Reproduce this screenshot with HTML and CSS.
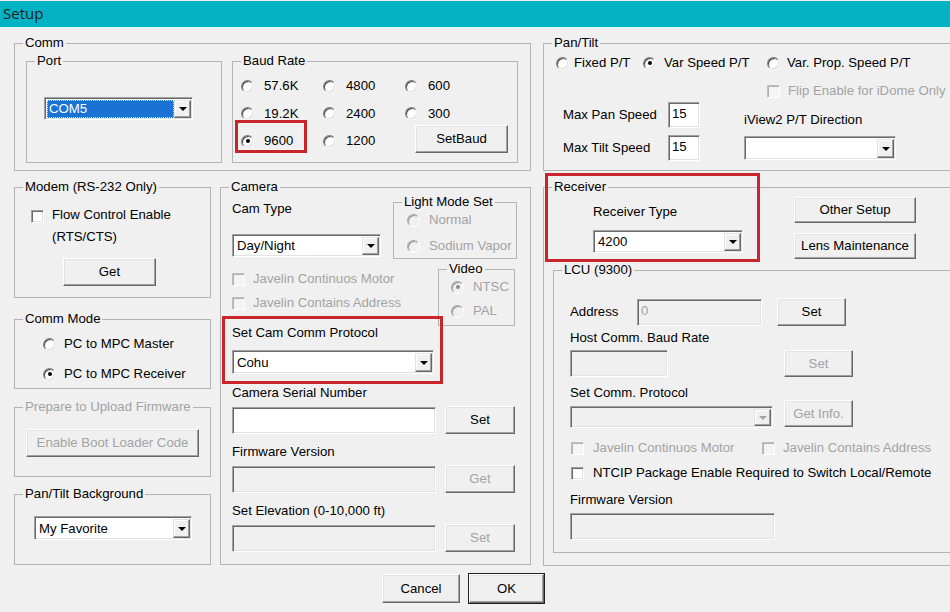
FILE: index.html
```html
<!DOCTYPE html>
<html>
<head>
<meta charset="utf-8">
<title>Setup</title>
<link rel="stylesheet" href="styles.css">
</head>
<body>
<div class="titlebar">Setup</div>
<div class="main">
  <div class="row1">
    <fieldset class="grp comm">
      <legend>Comm</legend>
      <div class="comm-body">
        <fieldset class="grp port">
          <legend>Port</legend>
          <div class="combo port-combo"><span class="combo-text"><span class="sel">COM5</span></span><span class="combo-btn"></span></div>
        </fieldset>
        <fieldset class="grp baud">
          <legend>Baud Rate</legend>
          <div class="baud-grid">
            <div class="opt g10"><span class="radio"></span>57.6K</div>
            <div class="opt g10"><span class="radio"></span>4800</div>
            <div class="opt g10"><span class="radio"></span>600</div>
            <div class="opt g10"><span class="radio"></span>19.2K</div>
            <div class="opt g10"><span class="radio"></span>2400</div>
            <div class="opt g10"><span class="radio"></span>300</div>
            <div class="opt g10 hl-baud"><span class="radio on"></span>9600</div>
            <div class="opt g10"><span class="radio"></span>1200</div>
            <div class="btn setbaud">SetBaud</div>
          </div>
        </fieldset>
      </div>
    </fieldset>

    <fieldset class="grp pantilt">
      <legend>Pan/Tilt</legend>
      <div class="pt-body">
        <div class="pt-radios">
          <div class="opt pt-r1"><span class="radio"></span>Fixed P/T</div>
          <div class="opt pt-r2"><span class="radio on"></span>Var Speed P/T</div>
          <div class="opt pt-r3"><span class="radio"></span>Var. Prop. Speed P/T</div>
        </div>
        <div class="opt flip dis"><span class="check dis"></span>Flip Enable for iDome Only</div>
        <div class="pt-speeds">
          <div class="speed-grid">
            <span class="speed-lbl">Max Pan Speed</span><div class="field speed-in">15</div>
            <span class="speed-lbl">Max Tilt Speed</span><div class="field speed-in">15</div>
          </div>
          <div class="iview">
            <div class="iview-lbl">iView2 P/T Direction</div>
            <div class="combo iview-combo"><span class="combo-text"></span><span class="combo-btn"></span></div>
          </div>
        </div>
      </div>
    </fieldset>
  </div>

  <div class="row2">
    <div class="leftcol">
      <fieldset class="grp modem">
        <legend>Modem (RS-232 Only)</legend>
        <div class="modem-body">
          <div class="flow"><span class="check"></span><span>Flow Control Enable<br>(RTS/CTS)</span></div>
          <div class="btn get-btn">Get</div>
        </div>
      </fieldset>
      <fieldset class="grp commmode">
        <legend>Comm Mode</legend>
        <div class="cm-body">
          <div class="opt g8"><span class="radio"></span>PC to MPC Master</div>
          <div class="opt g8"><span class="radio on"></span>PC to MPC Receiver</div>
        </div>
      </fieldset>
      <fieldset class="grp prepare">
        <legend class="dis">Prepare to Upload Firmware</legend>
        <div class="btn dis boot-btn">Enable Boot Loader Code</div>
      </fieldset>
      <fieldset class="grp ptbg">
        <legend>Pan/Tilt Background</legend>
        <div class="combo ptbg-combo"><span class="combo-text">My Favorite</span><span class="combo-btn"></span></div>
      </fieldset>
    </div>

    <fieldset class="grp camera">
      <legend>Camera</legend>
      <div class="cam-body">
        <div class="cam-top">
          <div class="cam-left">
            <div>Cam Type</div>
            <div class="combo camtype-combo"><span class="combo-text">Day/Night</span><span class="combo-btn"></span></div>
            <div class="opt g8 dis jav1"><span class="check dis"></span>Javelin Continuos Motor</div>
            <div class="opt g8 dis jav2"><span class="check dis"></span>Javelin Contains Address</div>
          </div>
          <div class="cam-right">
            <fieldset class="grp lightmode">
              <legend>Light Mode Set</legend>
              <div class="lm-body">
                <div class="opt g9 dis"><span class="radio dis"></span>Normal</div>
                <div class="opt g9 dis"><span class="radio dis"></span>Sodium Vapor</div>
              </div>
            </fieldset>
            <fieldset class="grp video">
              <legend>Video</legend>
              <div class="vid-body">
                <div class="opt g9 dis"><span class="radio dis on"></span>NTSC</div>
                <div class="opt g9 dis"><span class="radio dis"></span>PAL</div>
              </div>
            </fieldset>
          </div>
        </div>
        <div class="cam-proto">
          <div>Set Cam Comm Protocol</div>
          <div class="combo proto-combo"><span class="combo-text">Cohu</span><span class="combo-btn"></span></div>
        </div>
        <div class="cam-lbl">Camera Serial Number</div>
        <div class="cam-row"><div class="field cam-in"></div><div class="btn cam-btn">Set</div></div>
        <div class="cam-lbl">Firmware Version</div>
        <div class="cam-row"><div class="field dis cam-in"></div><div class="btn dis cam-btn">Get</div></div>
        <div class="cam-lbl">Set Elevation (0-10,000 ft)</div>
        <div class="cam-row"><div class="field dis cam-in"></div><div class="btn dis cam-btn">Set</div></div>
      </div>
    </fieldset>

    <fieldset class="grp receiver">
      <legend>Receiver</legend>
      <div class="rcv-top">
        <div class="rcv-type">
          <div>Receiver Type</div>
          <div class="combo rcv-combo"><span class="combo-text">4200</span><span class="combo-btn"></span></div>
        </div>
        <div class="rcv-btns">
          <div class="btn rcv-btn">Other Setup</div>
          <div class="btn rcv-btn">Lens Maintenance</div>
        </div>
      </div>
      <fieldset class="grp lcu">
        <legend>LCU (9300)</legend>
        <div class="lcu-body">
          <div class="addr-row"><span class="addr-lbl">Address</span><div class="field dis addr-in">0</div><div class="btn addr-btn">Set</div></div>
          <div class="lcu-lbl1">Host Comm. Baud Rate</div>
          <div class="hcbr-row"><div class="field dis hcbr-in"></div><div class="btn dis hcbr-btn">Set</div></div>
          <div class="lcu-lbl2">Set Comm. Protocol</div>
          <div class="proto-row"><div class="combo dis lcu-combo"><span class="combo-text"></span><span class="combo-btn"></span></div><div class="btn dis getinfo-btn">Get Info.</div></div>
          <div class="jav-row">
            <div class="opt g9 dis jav-a"><span class="check dis"></span>Javelin Continuos Motor</div>
            <div class="opt g8 dis"><span class="check dis"></span>Javelin Contains Address</div>
          </div>
          <div class="opt g9 ntcip"><span class="check"></span>NTCIP Package Enable Required to Switch Local/Remote</div>
          <div class="lcu-lbl3">Firmware Version</div>
          <div class="field dis lcu-fw"></div>
        </div>
      </fieldset>
    </fieldset>
  </div>

  <div class="bottom">
    <div class="btn cancel-btn">Cancel</div>
    <div class="btn default ok-btn">OK</div>
  </div>
</div>
</body>
</html>
```

FILE: styles.css
```css
* { box-sizing: border-box; }
html, body { margin: 0; padding: 0; }
body {
  width: 950px;
  height: 612px;
  overflow: hidden;
  background: #f0f0f0;
  font-family: "Liberation Sans", Arial, sans-serif;
  font-size: 13.2px;
  line-height: 16px;
  color: #000;
}

.titlebar {
  margin-top: 1px;
  height: 28px;
  background: #03b3c3;
  border-bottom: 2px solid #e3f5f7;
  padding-left: 3px;
  font-family: "Open Sans", "Liberation Sans", sans-serif;
  font-size: 15px;
  line-height: 24px;
  color: #1d1d1d;
}

.main { padding: 6px 0 0 14px; width: 950px; height: 583px; overflow: hidden; }
.row1, .row2 { display: flex; align-items: flex-start; }

/* group boxes */
.grp {
  margin: 0;
  padding: 0;
  border: 1px solid #b4b4b4;
  min-width: 0;
  flex: none;
}
.grp > legend {
  padding: 0 2px;
  margin-left: 8px;
  line-height: 16px;
  height: 16px;
  white-space: nowrap;
}
.dis { color: #a3a3a3; }

/* generic controls */
.btn {
  display: flex;
  align-items: center;
  justify-content: center;
  background: #f0f0f0;
  border: 1px solid;
  border-color: #fff #696969 #696969 #fff;
  box-shadow: inset -1px -1px 0 #a0a0a0, inset 1px 1px 0 #e3e3e3;
  white-space: nowrap;
  flex: none;
}
.btn.default { outline: 1px solid #1e1e1e; }

.field {
  background: #fff;
  border: 1px solid;
  border-color: #a0a0a0 #fff #fff #a0a0a0;
  box-shadow: inset 1px 1px 0 #696969, inset -1px -1px 0 #e3e3e3;
  padding: 3px 3px 0;
  flex: none;
}
.field.dis { background: #f0f0f0; }

.combo {
  display: flex;
  background: #fff;
  border: 1px solid;
  border-color: #a0a0a0 #fff #fff #a0a0a0;
  box-shadow: inset 1px 1px 0 #696969, inset -1px -1px 0 #e3e3e3;
  padding: 2px 1px 1px 2px;
  flex: none;
}
.combo.dis { background: #f0f0f0; }
.combo-text {
  flex: 1;
  display: flex;
  align-items: center;
  padding-left: 2px;
  white-space: nowrap;
  overflow: hidden;
}
.combo-btn {
  width: 17px;
  flex: none;
  display: flex;
  align-items: center;
  justify-content: center;
  background: #f0f0f0;
  border: 1px solid;
  border-color: #e3e3e3 #696969 #696969 #e3e3e3;
  box-shadow: inset -1px -1px 0 #a0a0a0, inset 1px 1px 0 #fff;
}
.combo-btn::after {
  content: "";
  border-left: 4px solid transparent;
  border-right: 4px solid transparent;
  border-top: 4px solid #000;
}
.combo.dis .combo-btn::after { border-top-color: #a3a3a3; }
.sel {
  display: flex;
  align-items: center;
  align-self: stretch;
  flex: 1;
  margin-left: -2px;
  padding-left: 2px;
  background: #1a73d4;
  color: #fff;
  outline: 1px dotted #cfe0f5;
  outline-offset: -1px;
}

.opt { display: flex; align-items: center; gap: 7px; white-space: nowrap; height: 16px; }
.g8 { gap: 8px; }
.g9 { gap: 9px; }
.g10 { gap: 10px; }

.radio {
  width: 13px;
  height: 13px;
  border-radius: 50%;
  background: #fff;
  border: 1px solid;
  border-color: #7d7d7d #f4f4f4 #f4f4f4 #7d7d7d;
  box-shadow: inset 1px 1px 0 #4a4a4a, inset -1px -1px 0 #dcdcdc;
  flex: none;
  display: flex;
  align-items: center;
  justify-content: center;
}
.radio.on::after {
  content: "";
  width: 4px;
  height: 4px;
  border-radius: 50%;
  background: #000;
}
.radio.dis { background: #f0f0f0; border-color: #a8a8a8 #fff #fff #a8a8a8; box-shadow: inset 1px 1px 0 #9a9a9a; }
.radio.dis.on::after { background: #8a8a8a; }

.check {
  width: 13px;
  height: 13px;
  background: #fff;
  border: 1px solid;
  border-color: #a0a0a0 #fff #fff #a0a0a0;
  box-shadow: inset 1px 1px 0 #696969, inset -1px -1px 0 #e3e3e3;
  flex: none;
}
.check.dis { background: #f4f4f4; border-color: #c0c0c0 #fff #fff #c0c0c0; box-shadow: inset 1px 1px 0 #b0b0b0; }

/* Comm */
.comm { width: 517px; height: 136px; }
.comm-body { display: flex; gap: 10px; padding: 2px 0 0 11px; }
.port { width: 196px; height: 110px; }
.port-combo { width: 149px; height: 23px; margin: 28px 0 0 17px; }
.baud { width: 286px; height: 110px; }
.baud-grid {
  display: grid;
  grid-template-columns: 82px 82px 1fr;
  grid-auto-rows: 16px;
  row-gap: 11.5px;
  padding: 9px 0 0 8px;
}
.hl-baud { position: relative; }
.hl-baud::after {
  content: "";
  position: absolute;
  left: -6px;
  top: -13px;
  right: 16px;
  bottom: -4px;
  border: 3px solid #c9252c;
}
.setbaud { width: 93px; height: 28px; margin: -4px 0 0 10px; align-self: center; justify-self: start; }

/* Pan/Tilt */
.pantilt { width: 430px; height: 136px; margin-left: 12px; }
.pt-body { padding: 4px 0 0 12px; }
.pt-radios { display: flex; }
.pt-r1 { width: 87px; gap: 5px; }
.pt-r2 { width: 124px; gap: 8px; }
.pt-r3 { gap: 7px; }
.flip { margin: 12px 0 0 211px; gap: 8px; }
.pt-speeds { display: flex; margin-top: 3px; }
.speed-grid {
  display: grid;
  grid-template-columns: 105px 32px;
  grid-auto-rows: 26px;
  row-gap: 7px;
  align-items: center;
  margin-left: 7px;
}
.speed-in { height: 26px; }
.iview { margin-left: 44px; }
.iview-lbl { margin-top: 10px; }
.iview-combo { width: 152px; height: 24px; margin-top: 8px; }

/* row 2 */
.row2 { margin-top: 8px; }
.leftcol { width: 197px; flex: none; }
.modem { width: 197px; height: 119px; }
.modem-body { padding: 9px 0 0 16px; }
.flow { display: flex; gap: 8px; align-items: flex-start; line-height: 22px; }
.flow .check { margin-top: 6px; }
.get-btn { width: 93px; height: 28px; margin: 10px 0 0 32px; }
.commmode { width: 197px; height: 78px; margin-top: 13px; }
.cm-body { padding: 9px 0 0 28px; display: flex; flex-direction: column; gap: 14px; }
.prepare { width: 197px; height: 78px; margin-top: 10px; }
.boot-btn { width: 173px; height: 28px; margin: 14px 0 0 11px; }
.ptbg { width: 197px; height: 79px; margin-top: 9px; }
.ptbg-combo { width: 158px; height: 24px; margin: 14px 0 0 19px; }

/* Camera */
.camera { width: 311px; height: 386px; margin-left: 9px; }
.cam-body { padding: 6px 0 0 11px; }
.cam-top { display: grid; grid-template-columns: 161px auto; height: 110px; align-items: start; }
.camtype-combo { width: 149px; height: 23px; margin-top: 17px; }
.jav1 { margin-top: 14px; }
.jav2 { margin-top: 8px; }
.cam-right { margin-top: -7px; }
.lightmode { width: 124px; height: 65px; }
.lm-body { padding: 2px 0 0 13px; display: flex; flex-direction: column; gap: 10px; }
.video { width: 77px; height: 65px; margin: 2px 0 0 45px; }
.vid-body { padding: 2px 0 0 12px; display: flex; flex-direction: column; gap: 8px; }
.cam-proto { margin-top: 14px; width: 202px; position: relative; }
.cam-proto::after {
  content: "";
  position: absolute;
  left: -10px;
  right: -9px;
  top: -9px;
  bottom: -10px;
  border: 3px solid #c9252c;
}
.proto-combo { width: 202px; height: 24px; margin-top: 9px; }
.cam-lbl { margin-top: 10px; }
.cam-proto + .cam-lbl { margin-top: 11px; }
.cam-row { display: flex; align-items: center; gap: 9px; margin-top: 5px; }
.cam-in { width: 204px; height: 27px; }
.cam-btn { width: 70px; height: 28px; }

/* Receiver */
.receiver { width: 430px; height: 387px; margin-left: 12px; }
.rcv-top { display: flex; align-items: flex-start; }
.rcv-type { margin: 9px 0 0 49px; position: relative; }
.rcv-type::after {
  content: "";
  position: absolute;
  left: -48px;
  right: -17px;
  top: -31px;
  bottom: -9px;
  border: 3px solid #c9252c;
}
.rcv-combo { width: 150px; height: 23px; margin-top: 10px; }
.rcv-btns { margin: 2px 0 0 51px; display: flex; flex-direction: column; gap: 10px; }
.rcv-btn { width: 122px; height: 26px; }

.lcu { width: 410px; height: 291px; margin: 3px 0 0 9px; }
.lcu-body { padding: 20px 0 0 16px; }
.addr-row { display: flex; align-items: center; height: 28px; }
.addr-lbl { width: 67px; }
.addr-in { width: 125px; height: 27px; }
.addr-btn { width: 69px; height: 28px; margin-left: 15px; }
.lcu-lbl1 { margin-top: 4px; }
.hcbr-row { display: flex; margin-top: 4px; }
.hcbr-in { width: 98px; height: 27px; }
.hcbr-btn { width: 69px; height: 27px; margin-left: 116px; }
.lcu-lbl2 { margin-top: 8px; }
.proto-row { display: flex; align-items: flex-start; height: 28px; margin-top: -1px; }
.lcu-combo { width: 203px; height: 22px; margin-top: 6px; }
.getinfo-btn { width: 69px; height: 27px; margin-left: 11px; }
.jav-row { display: flex; margin: 12px 0 0 1px; }
.jav-a { width: 191px; }
.ntcip { margin: 9px 0 0 1px; }
.lcu-lbl3 { margin-top: 11px; }
.lcu-fw { width: 205px; height: 27px; margin-top: 5px; }

/* bottom */
.bottom { display: flex; gap: 9px; margin: 8px 0 0 368px; }
.cancel-btn { width: 78px; height: 29px; }
.ok-btn { width: 75px; height: 29px; }
```
